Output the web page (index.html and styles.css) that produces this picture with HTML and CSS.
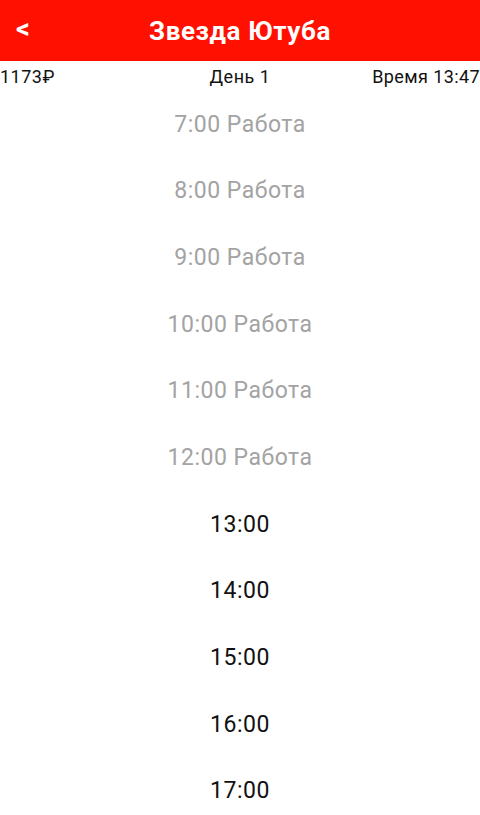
FILE: index.html
```html
<!DOCTYPE html>
<html lang="ru">
<head>
<meta charset="utf-8">
<title>Звезда Ютуба</title>
<link rel="stylesheet" href="styles.css">
</head>
<body>
<header class="topbar">
  <span class="back">&lt;</span>
  <h1 class="title">Звезда Ютуба</h1>
</header>
<div class="info">
  <span class="money">1173₽</span>
  <span class="day">День 1</span>
  <span class="time">Время 13:47</span>
</div>
<ul class="schedule">
  <li class="slot done">7:00 Работа</li>
  <li class="slot done">8:00 Работа</li>
  <li class="slot done">9:00 Работа</li>
  <li class="slot done">10:00 Работа</li>
  <li class="slot done">11:00 Работа</li>
  <li class="slot done">12:00 Работа</li>
  <li class="slot">13:00</li>
  <li class="slot">14:00</li>
  <li class="slot">15:00</li>
  <li class="slot">16:00</li>
  <li class="slot">17:00</li>
</ul>
</body>
</html>
```
FILE: styles.css
```css
html, body {
  margin: 0;
  padding: 0;
  background: #ffffff;
  font-family: Roboto, "Noto Sans", sans-serif;
  overflow: hidden;
}
.topbar {
  height: 61px;
  background: #ff1000;
  display: flex;
  align-items: center;
  justify-content: center;
  position: relative;
}
.back {
  position: absolute;
  left: 16px;
  top: 14px;
  color: #ffffff;
  font-size: 27px;
  font-weight: 700;
  line-height: 30px;
}
.title {
  margin: 0;
  color: #ffffff;
  font-size: 26px;
  font-weight: 700;
  letter-spacing: 0.6px;
  line-height: 30px;
}
.info {
  height: 30px;
  display: grid;
  grid-template-columns: 1fr auto 1fr;
  align-items: center;
  font-size: 18px;
  letter-spacing: 0.5px;
  color: #111111;
}
.money {
  justify-self: start;
}
.day {
  justify-self: center;
}
.time {
  justify-self: end;
  letter-spacing: 0.4px;
}
.schedule {
  list-style: none;
  margin: 0;
  padding: 0;
}
.slot {
  height: 66.67px;
  display: flex;
  align-items: center;
  justify-content: center;
  font-size: 23px;
  letter-spacing: 0.5px;
  color: #111111;
}
.slot.done {
  color: #a3a3a3;
}
```
